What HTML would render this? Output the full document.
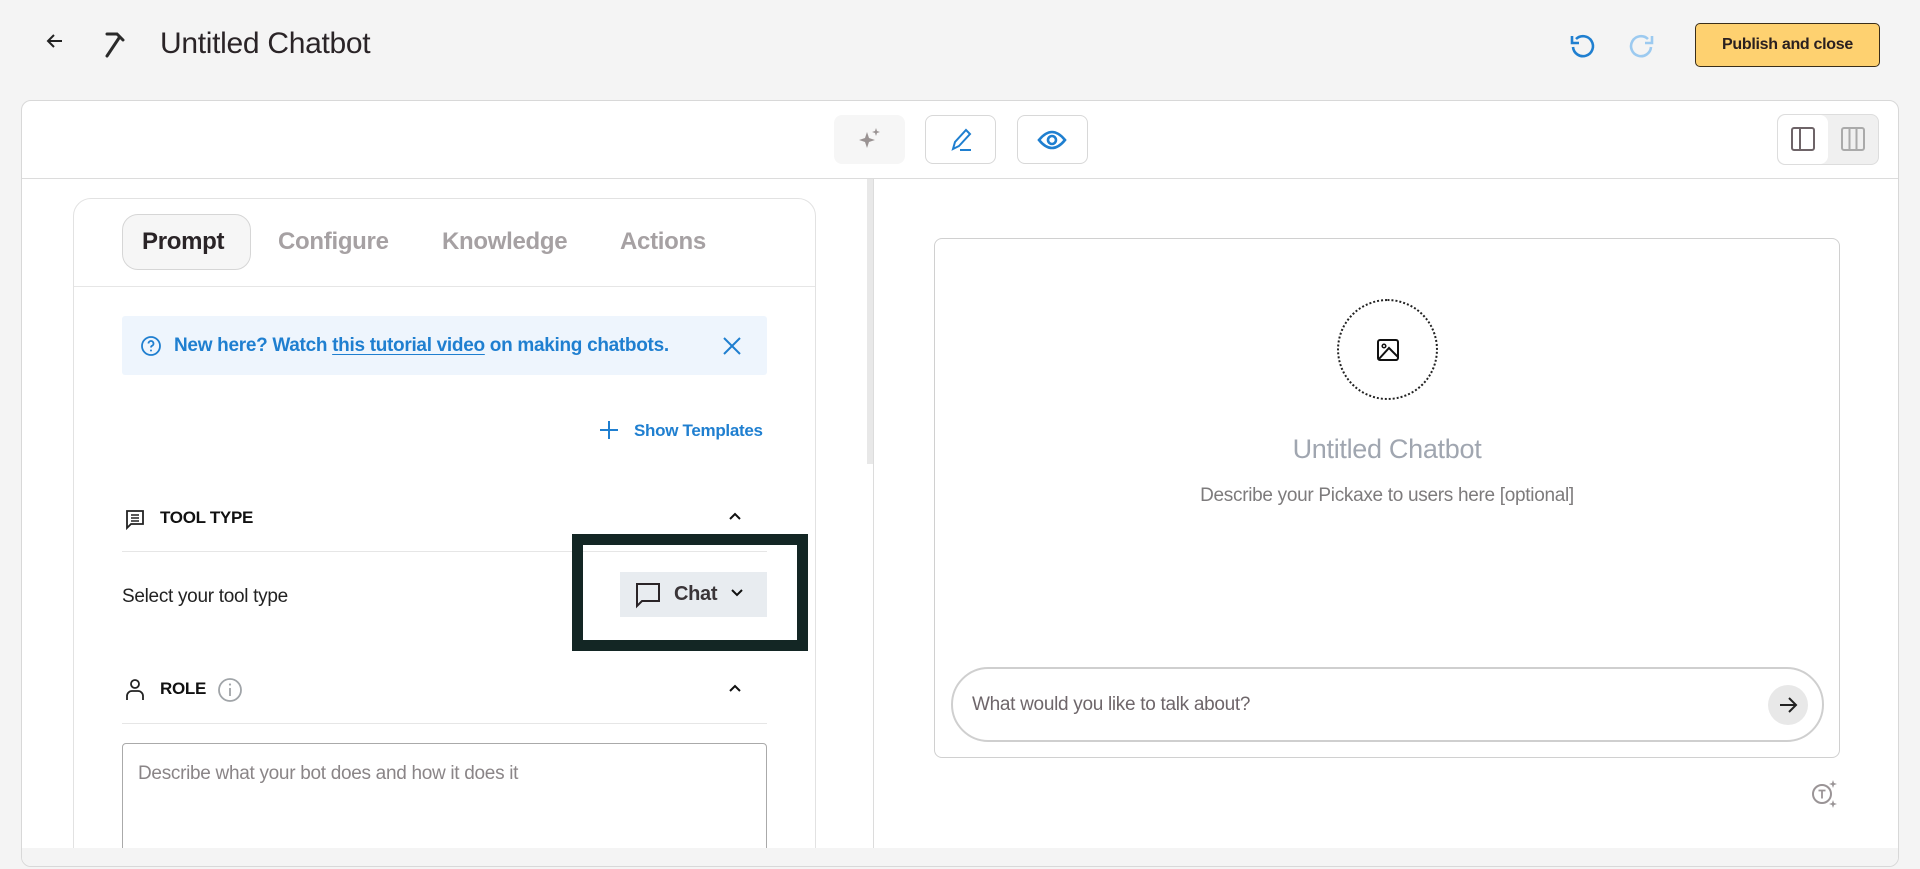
<!DOCTYPE html>
<html><head><meta charset="utf-8"><style>
*{box-sizing:border-box;margin:0;padding:0}
body{width:1920px;height:869px;background:#f4f4f4;font-family:"Liberation Sans",sans-serif;position:relative;overflow:hidden;color:#222}
.a{position:absolute}
.t{white-space:nowrap;letter-spacing:-0.3px}
</style></head><body>
<svg class="a" style="left:44px;top:31px" width="22" height="20" viewBox="0 0 22 20"><path d="M18 10H4M10 4L4 10l6 6" fill="none" stroke="#222" stroke-width="2"/></svg>
<svg class="a" style="left:101px;top:30px" width="28" height="30" viewBox="0 0 28 30"><path d="M6 4h10l6 6M18 8L6 26" fill="none" stroke="#2a2a2a" stroke-width="3" stroke-linecap="round"/></svg>
<div class="a t" style="left:160px;top:27px;font-size:30px;color:#2a2427">Untitled Chatbot</div>
<svg class="a" style="left:1568px;top:31px" width="30" height="30" viewBox="0 0 30 30"><path d="M8 8A10 10 0 1 1 5 16" fill="none" stroke="#1f7fd0" stroke-width="2.6"/><path d="M4 5v7h7" fill="none" stroke="#1f7fd0" stroke-width="2.6"/></svg>
<svg class="a" style="left:1626px;top:31px" width="30" height="30" viewBox="0 0 30 30"><path d="M22 8A10 10 0 1 0 25 16" fill="none" stroke="#9ccaf0" stroke-width="2.6"/><path d="M26 5v7h-7" fill="none" stroke="#9ccaf0" stroke-width="2.6"/></svg>
<div class="a t" style="left:1695px;top:23px;width:185px;height:44px;background:#fed170;border:1.5px solid #3a2e1a;border-radius:5px;font-size:16px;font-weight:bold;text-align:center;line-height:41px;color:#2a2020">Publish and close</div>

<div class="a" style="left:21px;top:100px;width:1878px;height:767px;background:#fff;border:1px solid #d8d8d8;border-radius:10px;overflow:hidden">
  <div class="a" style="left:0;top:77px;width:100%;height:1px;background:#dcdcdc"></div>
  <div class="a" style="left:812px;top:14px;width:71px;height:49px;background:#f6f6f6;border-radius:8px"></div>
  <svg class="a" style="left:834px;top:24px" width="28" height="28" viewBox="0 0 28 28"><path d="M11 7l2 6 6 2-6 2-2 6-2-6-6-2 6-2zM20 3l1 3 3 1-3 1-1 3-1-3-3-1 3-1z" fill="#9a9393"/></svg>
  <div class="a" style="left:903px;top:14px;width:71px;height:49px;border:1px solid #d8d8d8;border-radius:8px"></div>
  <svg class="a" style="left:925px;top:24px" width="28" height="30" viewBox="0 0 28 30"><path d="M6 24l2-7 11-12 4 4-11 12zM13 25h11" fill="none" stroke="#1f7fd0" stroke-width="2"/></svg>
  <div class="a" style="left:995px;top:14px;width:71px;height:49px;border:1px solid #d8d8d8;border-radius:8px"></div>
  <svg class="a" style="left:1015px;top:27px" width="30" height="24" viewBox="0 0 30 24"><path d="M2 12Q15-4 28 12Q15 28 2 12z" fill="none" stroke="#1f7fd0" stroke-width="2.6"/><circle cx="15" cy="12" r="4" fill="none" stroke="#1f7fd0" stroke-width="2.6"/></svg>
  <div class="a" style="left:1755px;top:13px;width:102px;height:51px;background:#f0f0f0;border:1px solid #ddd;border-radius:8px"></div>
  <div class="a" style="left:1756px;top:14px;width:50px;height:49px;background:#fff;border-radius:8px"></div>
  <svg class="a" style="left:1768px;top:25px" width="26" height="26" viewBox="0 0 26 26"><rect x="2" y="2" width="22" height="22" rx="2" fill="none" stroke="#6e6468" stroke-width="2"/><path d="M10 2v22" stroke="#6e6468" stroke-width="2"/></svg>
  <svg class="a" style="left:1818px;top:25px" width="26" height="26" viewBox="0 0 26 26"><rect x="2" y="2" width="22" height="22" rx="2" fill="none" stroke="#aaa" stroke-width="2"/><path d="M9.5 2v22M16.5 2v22" stroke="#aaa" stroke-width="2"/></svg>

  <div class="a" style="left:845px;top:78px;width:6px;height:285px;background:#e8e8e8"></div>
  <div class="a" style="left:851px;top:78px;width:1px;height:700px;background:#dcdcdc"></div>

  <!-- left card -->
  <div class="a" style="left:51px;top:97px;width:743px;height:700px;border:1px solid #e2e2e2;border-radius:18px">
    <div class="a" style="left:0;top:87px;width:100%;height:1px;background:#e6e6e6"></div>
    <div class="a" style="left:48px;top:15px;width:129px;height:56px;background:#f6f6f6;border:1px solid #d6d6d6;border-radius:16px"></div>
    <div class="a t" style="left:68px;top:29px;font-size:24px;font-weight:bold;color:#2a2427">Prompt</div>
    <div class="a t" style="left:204px;top:29px;font-size:24px;font-weight:bold;color:#a6a1a3">Configure</div>
    <div class="a t" style="left:368px;top:29px;font-size:24px;font-weight:bold;color:#a6a1a3">Knowledge</div>
    <div class="a t" style="left:546px;top:29px;font-size:24px;font-weight:bold;color:#a6a1a3">Actions</div>
    <div class="a" style="left:48px;top:117px;width:645px;height:59px;background:#eef5fd;border-radius:3px"></div>
    <svg class="a" style="left:66px;top:136px" width="22" height="22" viewBox="0 0 22 22"><circle cx="11" cy="11" r="9" fill="none" stroke="#1f7fd0" stroke-width="1.8"/><path d="M8.5 8.5a2.5 2.5 0 1 1 3.5 2.3c-.8.4-1 1-1 1.7" fill="none" stroke="#1f7fd0" stroke-width="1.8"/><circle cx="11" cy="15.5" r="1" fill="#1f7fd0"/></svg>
    <div class="a t" style="left:100px;top:136px;font-size:19px;font-weight:bold;color:#1f7fd0">New here? Watch <span style="text-decoration:underline;text-underline-offset:3px">this tutorial video</span> on making chatbots.</div>
    <svg class="a" style="left:647px;top:136px" width="22" height="22" viewBox="0 0 22 22"><path d="M3 3l16 16M19 3L3 19" stroke="#1f7fd0" stroke-width="2"/></svg>
    <svg class="a" style="left:524px;top:220px" width="22" height="22" viewBox="0 0 22 22"><path d="M11 2v18M2 11h18" stroke="#1f7fd0" stroke-width="2"/></svg>
    <div class="a t" style="left:560px;top:222px;font-size:17px;font-weight:bold;color:#1f7fd0">Show Templates</div>
    <svg class="a" style="left:50px;top:309px" width="22" height="22" viewBox="0 0 22 22"><path d="M3 3h16v13H7l-4 4z" fill="none" stroke="#222" stroke-width="1.8"/><path d="M7 7h8M7 10h8M7 13h8" stroke="#222" stroke-width="1.5"/></svg>
    <div class="a t" style="left:86px;top:309px;font-size:17px;font-weight:bold;color:#111">TOOL TYPE</div>
    <svg class="a" style="left:653px;top:311px" width="16" height="12" viewBox="0 0 16 12"><path d="M3 9l5-5 5 5" fill="none" stroke="#111" stroke-width="2"/></svg>
    <div class="a" style="left:48px;top:352px;width:645px;height:1px;background:#e6e6e6"></div>
    <div class="a t" style="left:48px;top:387px;font-size:19px;color:#222">Select your tool type</div>
    <div class="a" style="left:498px;top:335px;width:236px;height:117px;border:11px solid #132624"></div>
    <div class="a" style="left:546px;top:373px;width:147px;height:45px;background:#e8ecf0"></div>
    <svg class="a" style="left:560px;top:382px" width="28" height="28" viewBox="0 0 28 28"><path d="M3 3h22v17H8l-5 5z" fill="none" stroke="#2a2427" stroke-width="2"/></svg>
    <div class="a t" style="left:600px;top:384px;font-size:20px;font-weight:bold;color:#3a3538">Chat</div>
    <svg class="a" style="left:655px;top:388px" width="16" height="12" viewBox="0 0 16 12"><path d="M3 3l5 5 5-5" fill="none" stroke="#111" stroke-width="2"/></svg>
    <svg class="a" style="left:51px;top:479px" width="20" height="24" viewBox="0 0 20 24"><circle cx="10" cy="6" r="4" fill="none" stroke="#222" stroke-width="1.8"/><path d="M2 22v-4a5 5 0 0 1 5-5h6a5 5 0 0 1 5 5v4" fill="none" stroke="#222" stroke-width="1.8"/></svg>
    <div class="a t" style="left:86px;top:480px;font-size:17px;font-weight:bold;color:#111">ROLE</div>
    <svg class="a" style="left:143px;top:478px" width="26" height="26" viewBox="0 0 26 26"><circle cx="13" cy="13" r="11" fill="none" stroke="#a0a4a8" stroke-width="1.8"/><path d="M13 11v8" stroke="#a0a4a8" stroke-width="1.8"/><circle cx="13" cy="7.5" r="1.1" fill="#a0a4a8"/></svg>
    <svg class="a" style="left:653px;top:483px" width="16" height="12" viewBox="0 0 16 12"><path d="M3 9l5-5 5 5" fill="none" stroke="#111" stroke-width="2"/></svg>
    <div class="a" style="left:48px;top:524px;width:645px;height:1px;background:#e6e6e6"></div>
    <div class="a" style="left:48px;top:544px;width:645px;height:120px;border:1px solid #aaa;border-radius:4px"></div>
    <div class="a t" style="left:64px;top:564px;font-size:19px;color:#8a8587">Describe what your bot does and how it does it</div>
  </div>

  <!-- preview -->
  <div class="a" style="left:912px;top:137px;width:906px;height:520px;border:1px solid #d0d0d0;border-radius:8px">
    <div class="a" style="left:402px;top:60px;width:101px;height:101px;border:2px dotted #222;border-radius:50%"></div>
    <svg class="a" style="left:440px;top:98px" width="26" height="26" viewBox="0 0 26 26"><rect x="3" y="3" width="20" height="20" rx="2" fill="none" stroke="#111" stroke-width="2"/><circle cx="9" cy="9" r="1.8" fill="none" stroke="#111" stroke-width="1.5"/><path d="M3 23l11-12 9 9" fill="none" stroke="#111" stroke-width="2"/></svg>
    <div class="a t" style="left:0;width:100%;text-align:center;top:195px;font-size:27px;color:#a0a6b0">Untitled Chatbot</div>
    <div class="a t" style="left:0;width:100%;text-align:center;top:246px;font-size:19px;color:#7d7b7c">Describe your Pickaxe to users here [optional]</div>
    <div class="a" style="left:16px;top:428px;width:873px;height:75px;border:2px solid #cfcfcf;border-radius:38px"></div>
    <div class="a t" style="left:37px;top:455px;font-size:19px;color:#6e666a">What would you like to talk about?</div>
    <div class="a" style="left:833px;top:446px;width:40px;height:40px;background:#e8e8e8;border-radius:50%"></div>
    <svg class="a" style="left:842px;top:455px" width="22" height="22" viewBox="0 0 22 22"><path d="M3 11h16M12 4l7 7-7 7" fill="none" stroke="#222" stroke-width="2"/></svg>
  </div>
  <svg class="a" style="left:1788px;top:677px" width="30" height="32" viewBox="0 0 30 32"><circle cx="12" cy="16" r="9" fill="none" stroke="#9a9496" stroke-width="2"/><path d="M8.5 12.5h7M12 12.5v8" stroke="#9a9496" stroke-width="1.8"/><path d="M23 2l1 3 3 1-3 1-1 3-1-3-3-1 3-1zM23 22l1 3 3 1-3 1-1 3-1-3-3-1 3-1z" fill="#9a9496"/></svg>

  <div class="a" style="left:0;top:747px;width:100%;height:20px;background:#f4f4f4"></div>
</div>
</body></html>
